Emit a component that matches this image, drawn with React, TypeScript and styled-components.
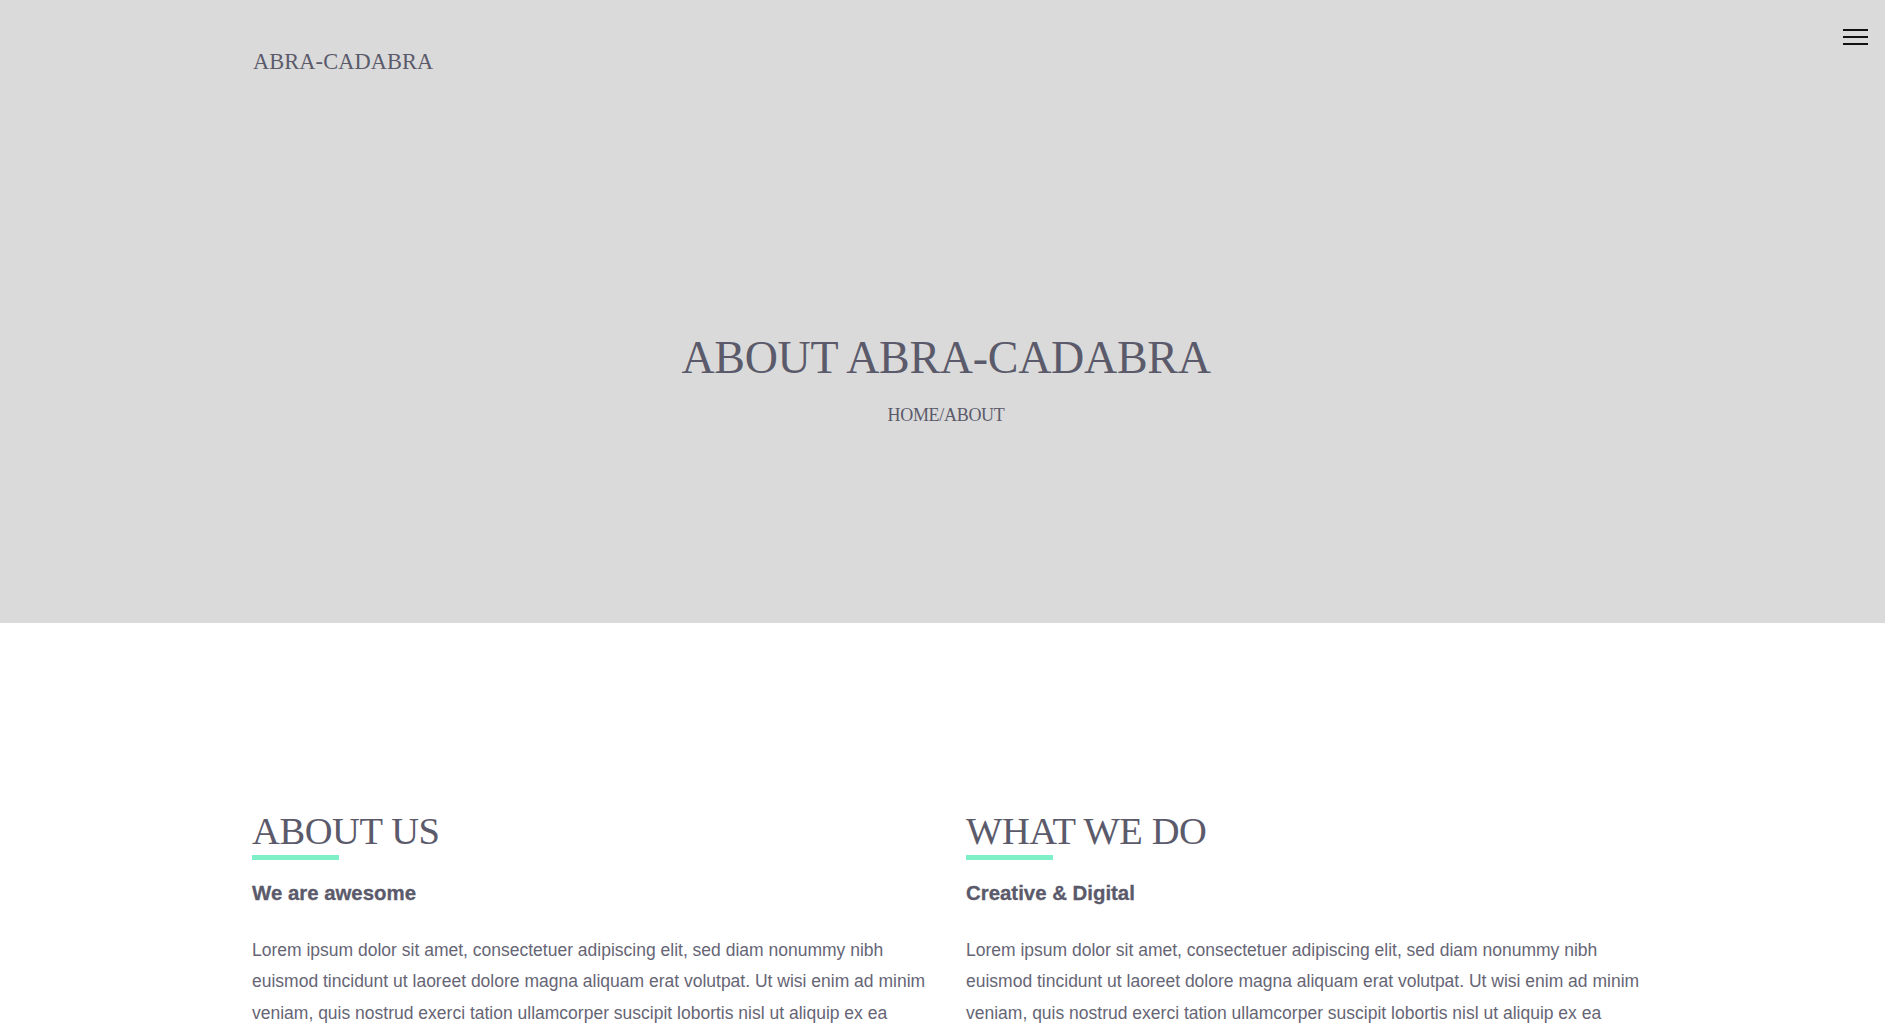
import React from "react";
import styled, { createGlobalStyle } from "styled-components";

const GlobalStyle = createGlobalStyle`
  html { scrollbar-width: none; }
  html::-webkit-scrollbar { display: none; }
  body {
    margin: 0;
    background: #ffffff;
    font-family: "Liberation Sans", Arial, sans-serif;
    color: #5b5a6b;
  }
  * { box-sizing: border-box; }
`;

const Hero = styled.header`
  position: relative;
  height: 623px;
  background: #dadada;
  display: flex;
  flex-direction: column;
`;

const TopBar = styled.div`
  padding: 51px 0 0 253px;
`;

const Logo = styled.a`
  display: inline-block;
  font-family: "Liberation Serif", "Times New Roman", serif;
  font-size: 22.4px;
  line-height: 1;
  color: #5b5a6b;
  text-decoration: none;
  letter-spacing: 0.1px;
`;

const MenuButton = styled.button`
  position: absolute;
  top: 29px;
  right: 17px;
  width: 25px;
  height: 16px;
  padding: 0;
  border: 0;
  background: transparent;
  display: flex;
  flex-direction: column;
  justify-content: space-between;
  cursor: pointer;
`;

const MenuLine = styled.span`
  display: block;
  width: 25px;
  height: 2px;
  background: #111111;
`;

const HeroCenter = styled.div`
  display: flex;
  flex-direction: column;
  align-items: center;
  padding-top: 262px;
  padding-left: 7px;
`;

const HeroTitle = styled.h1`
  margin: 0;
  font-family: "Liberation Serif", "Times New Roman", serif;
  font-weight: 400;
  font-size: 46px;
  line-height: 1;
  color: #5b5a6b;
  letter-spacing: -0.3px;
`;

const Breadcrumb = styled.nav`
  margin-top: 25px;
  font-family: "Liberation Serif", "Times New Roman", serif;
  font-size: 18px;
  line-height: 1;
  color: #5b5a6b;
  letter-spacing: -0.3px;
`;

const Crumb = styled.a`
  color: inherit;
  text-decoration: none;
`;

const Content = styled.section`
  padding: 189px 205px 80px 252px;
`;

const Columns = styled.div`
  display: grid;
  grid-template-columns: 714px 714px;
`;

const Column = styled.article`
  padding-right: 30px;
`;

const SectionTitle = styled.h2`
  margin: 0;
  font-family: "Liberation Serif", "Times New Roman", serif;
  font-weight: 400;
  font-size: 38.5px;
  line-height: 1;
  color: #5b5a6b;
  letter-spacing: -0.4px;
`;

const Accent = styled.div`
  width: 87px;
  height: 5px;
  margin-top: 4px;
  background: #7ef0c7;
`;

const SubTitle = styled.h3`
  margin: 23px 0 0;
  font-family: "Liberation Sans", Arial, sans-serif;
  font-weight: 700;
  font-size: 20.4px;
  line-height: 1;
  color: #5b5a6b;
  -webkit-text-stroke: 0.3px #5b5a6b;
`;

const Body = styled.p`
  margin: 32px 0 0;
  font-family: "Liberation Sans", Arial, sans-serif;
  font-size: 17.5px;
  line-height: 31.3px;
  color: #666575;
`;

const LOREM =
  "Lorem ipsum dolor sit amet, consectetuer adipiscing elit, sed diam nonummy nibh euismod tincidunt ut laoreet dolore magna aliquam erat volutpat. Ut wisi enim ad minim veniam, quis nostrud exerci tation ullamcorper suscipit lobortis nisl ut aliquip ex ea commodo consequat.";

const sections = [
  { title: "ABOUT US", sub: "We are awesome" },
  { title: "WHAT WE DO", sub: "Creative & Digital" },
];

export default function App() {
  return (
    <>
      <GlobalStyle />
      <Hero>
        <TopBar>
          <Logo href="#">ABRA-CADABRA</Logo>
        </TopBar>
        <MenuButton aria-label="Menu">
          <MenuLine />
          <MenuLine />
          <MenuLine />
        </MenuButton>
        <HeroCenter>
          <HeroTitle>ABOUT ABRA-CADABRA</HeroTitle>
          <Breadcrumb>
            <Crumb href="#">HOME</Crumb>/<Crumb href="#">ABOUT</Crumb>
          </Breadcrumb>
        </HeroCenter>
      </Hero>
      <Content>
        <Columns>
          {sections.map((s) => (
            <Column key={s.title}>
              <SectionTitle>{s.title}</SectionTitle>
              <Accent />
              <SubTitle>{s.sub}</SubTitle>
              <Body>{LOREM}</Body>
            </Column>
          ))}
        </Columns>
      </Content>
    </>
  );
}
